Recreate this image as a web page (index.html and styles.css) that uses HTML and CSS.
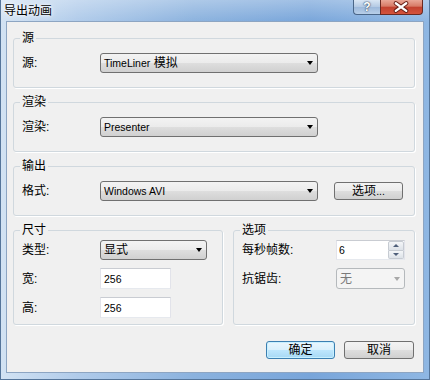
FILE: index.html
```html
<!DOCTYPE html>
<html lang="zh-CN">
<head>
    <meta charset="UTF-8">
    <title>导出动画</title>
    <link rel="stylesheet" href="styles.css">
</head>
<body>
    <div class="window">
        <div class="titlebar">
            <span class="title">导出动画</span>
            <div class="caption">
                <span class="cap help">?</span>
                <span class="cap close">
                    <svg width="43" height="15" viewBox="0 0 43 15">
                        <path d="M15.5 3 L26.5 11 M26.5 3 L15.5 11" stroke="#6b2219" stroke-width="4.5" stroke-linecap="round"/>
                        <path d="M15.5 3 L26.5 11 M26.5 3 L15.5 11" stroke="#fff" stroke-width="2.4" stroke-linecap="round"/>
                    </svg>
                </span>
            </div>
        </div>
        <div class="client">
            <!--源-->
            <fieldset class="group">
                <legend>源</legend>
                <div class="row">
                    <span class="lbl">源:</span>
                    <div class="combo wide"><span class="en">TimeLiner</span>&nbsp;模拟<i class="arrow"></i></div>
                </div>
            </fieldset>
            <!--渲染-->
            <fieldset class="group">
                <legend>渲染</legend>
                <div class="row">
                    <span class="lbl">渲染:</span>
                    <div class="combo wide"><span class="en">Presenter</span><i class="arrow"></i></div>
                </div>
            </fieldset>
            <!--输出-->
            <fieldset class="group">
                <legend>输出</legend>
                <div class="row">
                    <span class="lbl">格式:</span>
                    <div class="combo wide"><span class="en">Windows AVI</span><i class="arrow"></i></div>
                    <button class="btn opt">选项<span class="en">...</span></button>
                </div>
            </fieldset>
            <div class="split">
                <fieldset class="group small">
                    <legend>尺寸</legend>
                    <div class="row r1">
                        <span class="lbl">类型:</span>
                        <div class="combo mid">显式<i class="arrow"></i></div>
                    </div>
                    <div class="row r2">
                        <span class="lbl">宽:</span>
                        <div class="edit"><span class="en">256</span></div>
                    </div>
                    <div class="row r2">
                        <span class="lbl">高:</span>
                        <div class="edit"><span class="en">256</span></div>
                    </div>
                </fieldset>
                <fieldset class="group small opts">
                    <legend>选项</legend>
                    <div class="row r1">
                        <span class="lbl">每秒帧数:</span>
                        <div class="spin">
                            <span class="en">6</span>
                            <div class="spin-btns">
                                <span class="up"><i></i></span>
                                <span class="down"><i></i></span>
                            </div>
                        </div>
                    </div>
                    <div class="row r2">
                        <span class="lbl">抗锯齿:</span>
                        <div class="combo off">无<i class="arrow"></i></div>
                    </div>
                </fieldset>
            </div>
            <div class="actions">
                <button class="btn default">确定</button>
                <button class="btn cancel">取消</button>
            </div>
        </div>
    </div>
</body>
</html>
```

FILE: styles.css
```css
*{
    margin: 0;
    padding: 0;
    box-sizing: border-box;
}
body{
    width: 430px;
    height: 380px;
    overflow: hidden;
    font-family: "Liberation Sans", "Noto Sans CJK SC", sans-serif;
    font-size: 12px;
    line-height: 14px;
    color: #000;
}
.en{
    font-size: 10.5px;
}
.window{
    width: 430px;
    height: 380px;
    display: flex;
    flex-direction: column;
    padding: 0 7px 8px;
    background:
        linear-gradient(180deg, rgba(255,255,255,.3), rgba(255,255,255,0) 22px),
        linear-gradient(90deg, #d3e3f3 0%, #b0cbea 18%, #8bb2de 45%, #78a5da 72%, #8fb7e3 100%);
    box-shadow: inset 1px 0 #55759a, inset -1px 0 #55759a, inset 0 -1px #55759a;
}
.titlebar{
    height: 22px;
    margin: 0 -7px;
    padding: 0 7px 0 4px;
    display: flex;
    justify-content: space-between;
    align-items: flex-start;
}
.title{
    padding-top: 4px;
    font-size: 12px;
    text-shadow: 0 0 6px #fff, 0 0 3px #fff;
}
.caption{
    display: flex;
}
.cap{
    display: flex;
    justify-content: center;
    align-items: center;
    height: 15px;
    border: 1px solid #4a6688;
    border-top: none;
}
.help{
    width: 27px;
    border-right: none;
    border-radius: 0 0 0 4px;
    background: linear-gradient(#d9e6f4, #b3c9e3 50%, #9db9db 51%, #b8cfe9);
    color: #fff;
    font-weight: bold;
    font-size: 12px;
    text-shadow: 0 0 2px #2b3f5c, 0 0 1px #2b3f5c;
}
.close{
    width: 43px;
    border-color: #6a2a22;
    border-radius: 0 0 4px 0;
    background: linear-gradient(#e9a797, #d77a66 45%, #c2412f 50%, #d4543d 100%);
}
.client{
    height: 350px;
    background: #f0f0f0;
    padding: 9px 8px 0 6px;
    box-shadow: 0 0 0 1px #8da5c2;
}
.group{
    border: 1px solid #d0d8de;
    border-radius: 3px;
    padding: 8px 8px 14px;
    margin-bottom: 7px;
    min-width: 0;
    box-shadow: 1px 1px 0 #fff;
}
.group legend{
    padding: 0 2px;
    margin-left: -2px;
    line-height: 14px;
}
.row{
    display: flex;
    align-items: center;
    height: 20px;
}
.lbl{
    width: 78px;
    flex-shrink: 0;
}
.combo{
    height: 20px;
    display: flex;
    align-items: center;
    justify-content: space-between;
    padding: 0 4px 0 3px;
    border: 1px solid #707070;
    border-radius: 3px;
    background: linear-gradient(#f3f3f3, #ebebeb 50%, #dedede 51%, #d0d0d0);
    white-space: nowrap;
}
.combo .arrow{
    margin-left: auto;
    width: 0;
    height: 0;
    border-top: 4px solid #000;
    border-left: 3.5px solid transparent;
    border-right: 3.5px solid transparent;
}
.wide{
    width: 218px;
}
.mid{
    width: 107px;
}
.btn{
    height: 18px;
    border: 1px solid #707070;
    border-radius: 3px;
    background: linear-gradient(#f3f3f3, #ebebeb 50%, #dedede 51%, #d0d0d0);
    font-family: inherit;
    font-size: 12px;
    line-height: 14px;
    color: #000;
}
.opt{
    width: 69px;
    margin-left: 16px;
}
.split{
    display: grid;
    grid-template-columns: 210px 182px;
    column-gap: 10px;
    margin-top: 6px;
}
.small{
    margin-bottom: 0;
    padding: 3px 8px 6px;
}
.small .r2{
    height: 21px;
    margin-top: 8px;
}
.opts .lbl{
    width: 94px;
}
.edit{
    width: 71px;
    height: 21px;
    display: flex;
    align-items: center;
    padding-left: 3px;
    background: #fff;
    border: 1px solid;
    border-color: #c9ccd2 #e2e3ea #e6e9ee #e2e3ea;
}
.spin{
    width: 69px;
    height: 20px;
    display: flex;
    align-items: center;
    padding-left: 2px;
    background: #fff;
    border: 1px solid;
    border-color: #c9ccd2 #e2e3ea #e6e9ee #e2e3ea;
}
.spin-btns{
    margin-left: auto;
    width: 16px;
    height: 18px;
    display: flex;
    flex-direction: column;
}
.spin-btns span{
    flex: 1;
    display: flex;
    justify-content: center;
    align-items: center;
    border: 1px solid #c6cbd2;
    background: linear-gradient(#f4f6f8, #dde2e8);
}
.spin-btns .up{
    border-radius: 2px 2px 0 0;
}
.spin-btns .down{
    border-top: none;
    border-radius: 0 0 2px 2px;
}
.up i{
    border-bottom: 3px solid #4f5f7a;
    border-left: 3px solid transparent;
    border-right: 3px solid transparent;
}
.down i{
    border-top: 3px solid #4f5f7a;
    border-left: 3px solid transparent;
    border-right: 3px solid transparent;
}
.off{
    width: 69px;
    height: 21px;
    border-color: #b5b9bc;
    background: #f4f4f4;
    color: #7a7a7a;
}
.off .arrow{
    border-top-color: #a8a8a8;
}
.actions{
    display: flex;
    justify-content: flex-end;
    gap: 9px;
    margin-top: 16px;
    padding-right: 1px;
}
.default{
    width: 69px;
    border-color: #3c7fb1;
    background: linear-gradient(#eaf6fd, #d9f0fc 50%, #bee6fd 51%, #a7d9f5);
    box-shadow: inset 0 0 0 1px #c8f0ff;
}
.cancel{
    width: 70px;
}
```
